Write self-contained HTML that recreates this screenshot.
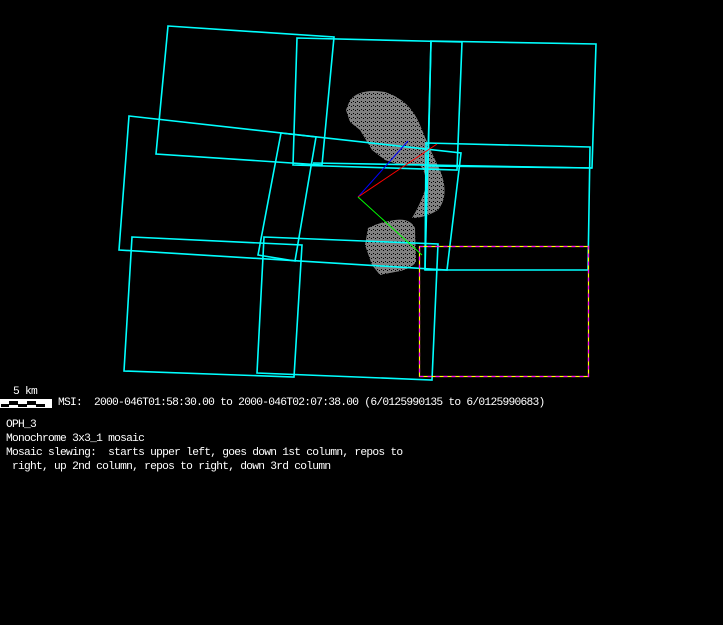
<!DOCTYPE html>
<html><head><style>
html,body{margin:0;padding:0;background:#000;}
body{width:723px;height:625px;position:relative;overflow:hidden;}
.t{position:absolute;color:#fff;font-family:"Liberation Mono",monospace;font-size:11px;letter-spacing:-0.73px;line-height:14px;white-space:pre;transform:scaleX(1.023);transform-origin:0 0;}
</style></head><body>
<svg width="723" height="625" style="position:absolute;left:0;top:0">
<defs>
<pattern id="dots" width="4" height="4" patternUnits="userSpaceOnUse">
<rect width="4" height="4" fill="#808080"/>
<rect x="1" y="1" width="1" height="1" fill="#000"/>
<rect x="3" y="2" width="1" height="1" fill="#000"/>
</pattern>
</defs>
<path d="M350,100 Q360,88 385,92 Q410,100 420,125 Q430,150 440,170 Q450,195 438,210 Q425,218 412,218 Q420,205 425,190 Q428,175 420,165 L400,165 L385,160 L372,150 L360,130 L350,122 L346,110 Z" fill="url(#dots)"/>
<path d="M368,228 Q380,222 395,220 Q410,218 415,228 L416,262 Q410,270 395,272 L380,275 L372,265 L365,245 Z" fill="url(#dots)"/>
<g fill="none" stroke="#00ffff" stroke-width="1.6">
<polygon points="168,26 334,37 322,165 156,154"/>
<polygon points="297,38 462,42 457,170 293,165"/>
<polygon points="431,41 596,44 592,168 428,166"/>
<polyline points="313,163 592,168"/>
<polyline points="431,41 425,270"/>
<polygon points="129,116 461,153 447,270 119,250"/>
<polygon points="281,133 316,137 295,261 258,255"/>
<polygon points="426,143 590,147 588,270 425,270"/>
<polygon points="132,237 302,245 294,377 124,371"/>
<polygon points="264,237 438,244 432,380 257,373"/>
</g>
<rect x="419.5" y="246.5" width="169" height="130" fill="none" stroke="#ffff00" stroke-width="1.2"/>
<rect x="419.5" y="246.5" width="169" height="130" fill="none" stroke="#ff00ff" stroke-width="1.2" stroke-dasharray="4 4"/>
<line x1="358" y1="197" x2="408" y2="141" stroke="#0000ff" stroke-width="1"/>
<line x1="358" y1="197" x2="437" y2="144" stroke="#ff0000" stroke-width="1"/>
<line x1="358" y1="197" x2="422" y2="255" stroke="#00ff00" stroke-width="1"/>
<rect x="0" y="399" width="52" height="9" fill="#fff"/>
<rect x="9" y="401" width="9" height="4" fill="#000"/>
<rect x="27" y="401" width="9" height="4" fill="#000"/>
<rect x="1" y="404" width="8" height="3" fill="#000"/>
<rect x="18" y="404" width="9" height="3" fill="#000"/>
<rect x="36" y="404" width="9" height="3" fill="#000"/>
</svg>
<div class="t" style="left:13px;top:385px">5 km</div>
<div class="t" style="left:58px;top:396px">MSI:  2000-046T01:58:30.00 to 2000-046T02:07:38.00 (6/0125990135 to 6/0125990683)</div>
<div class="t" style="left:6px;top:418px">OPH_3
Monochrome 3x3_1 mosaic
Mosaic slewing:  starts upper left, goes down 1st column, repos to
 right, up 2nd column, repos to right, down 3rd column</div>
</body></html>
